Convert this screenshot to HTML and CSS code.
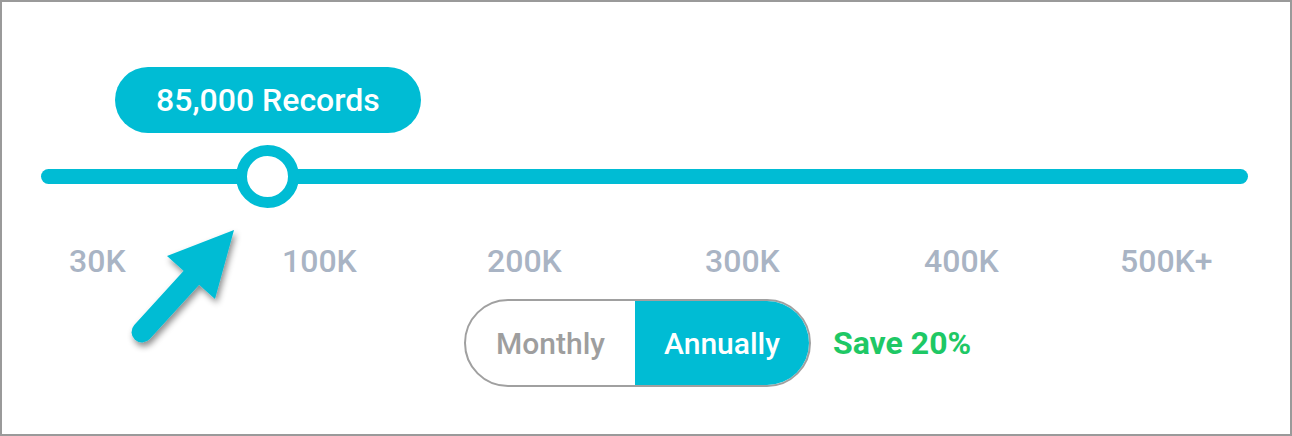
FILE: index.html
```html
<!DOCTYPE html>
<html lang="en">
<head>
<meta charset="utf-8">
<title>Records slider</title>
<link rel="stylesheet" href="styles.css">
</head>
<body>
<div class="frame">
  <div class="slider">
    <div class="tooltip" style="left: 18.8%">85,000 Records</div>
    <div class="track"></div>
    <div class="thumb" style="left: 18.8%"></div>
  </div>
  <div class="ticks">
    <span>30K</span>
    <span>100K</span>
    <span>200K</span>
    <span>300K</span>
    <span>400K</span>
    <span>500K+</span>
  </div>
  <div class="billing">
    <div class="toggle">
      <span class="opt">Monthly</span>
      <span class="opt active">Annually</span>
    </div>
    <span class="save">Save 20%</span>
  </div>
  <svg class="pointer" width="140" height="150" viewBox="120 215 140 150" aria-hidden="true">
    <defs>
      <filter id="sh" x="-30%" y="-30%" width="160%" height="160%">
        <feDropShadow dx="2" dy="4" stdDeviation="3" flood-color="#000" flood-opacity="0.45"/>
      </filter>
    </defs>
    <g filter="url(#sh)" fill="#00bcd4">
      <line x1="142" y1="332" x2="194" y2="275" stroke="#00bcd4" stroke-width="21" stroke-linecap="round"/>
      <polygon points="234,230 167,256 215,299"/>
    </g>
  </svg>
</div>
</body>
</html>
```

FILE: styles.css
```css
html, body {
  margin: 0;
  padding: 0;
  background: #fff;
}

.frame {
  position: relative;
  box-sizing: border-box;
  width: 1292px;
  height: 436px;
  border: 2px solid #9a9a9a;
  padding: 65px 42px 0 39px;
  font-family: Roboto, "Liberation Sans", sans-serif;
}

.slider {
  position: relative;
  padding-top: 102px;
  height: 15px;
}

.tooltip {
  position: absolute;
  top: 0;
  transform: translateX(-50%);
  width: 306px;
  height: 66px;
  box-sizing: border-box;
  border-radius: 33px;
  background: #00bcd4;
  color: #fff;
  font-size: 32px;
  font-weight: 500;
  display: flex;
  align-items: center;
  justify-content: center;
  white-space: nowrap;
}

.track {
  height: 15px;
  border-radius: 8px;
  background: #00bcd4;
}

.thumb {
  position: absolute;
  top: 78px;
  width: 41px;
  height: 41px;
  margin-left: -32px;
  border: 11px solid #00bcd4;
  border-radius: 50%;
  background: #fff;
}

.ticks {
  display: grid;
  grid-template-columns: 213px 205px 218px 219px 196px 1fr;
  margin: 61px 0 0 28px;
  font-size: 32px;
  font-weight: 500;
  line-height: 32px;
  color: #a9b4c4;
}

.billing {
  display: flex;
  align-items: center;
  gap: 22px;
  margin: 22px 0 0 423px;
}

.toggle {
  display: flex;
  width: 347px;
  height: 88px;
  box-sizing: border-box;
  border: 2px solid #a0a0a0;
  border-radius: 44px;
  overflow: hidden;
}

.opt {
  display: flex;
  align-items: center;
  justify-content: center;
  font-size: 30px;
  font-weight: 500;
  color: #9e9e9e;
  width: 169px;
}

.opt.active {
  flex: 1;
  background: #00bcd4;
  color: #fff;
}

.save {
  font-size: 32px;
  font-weight: 700;
  color: #1ec865;
}

.pointer {
  position: absolute;
  left: 118px;
  top: 213px;
}
```
